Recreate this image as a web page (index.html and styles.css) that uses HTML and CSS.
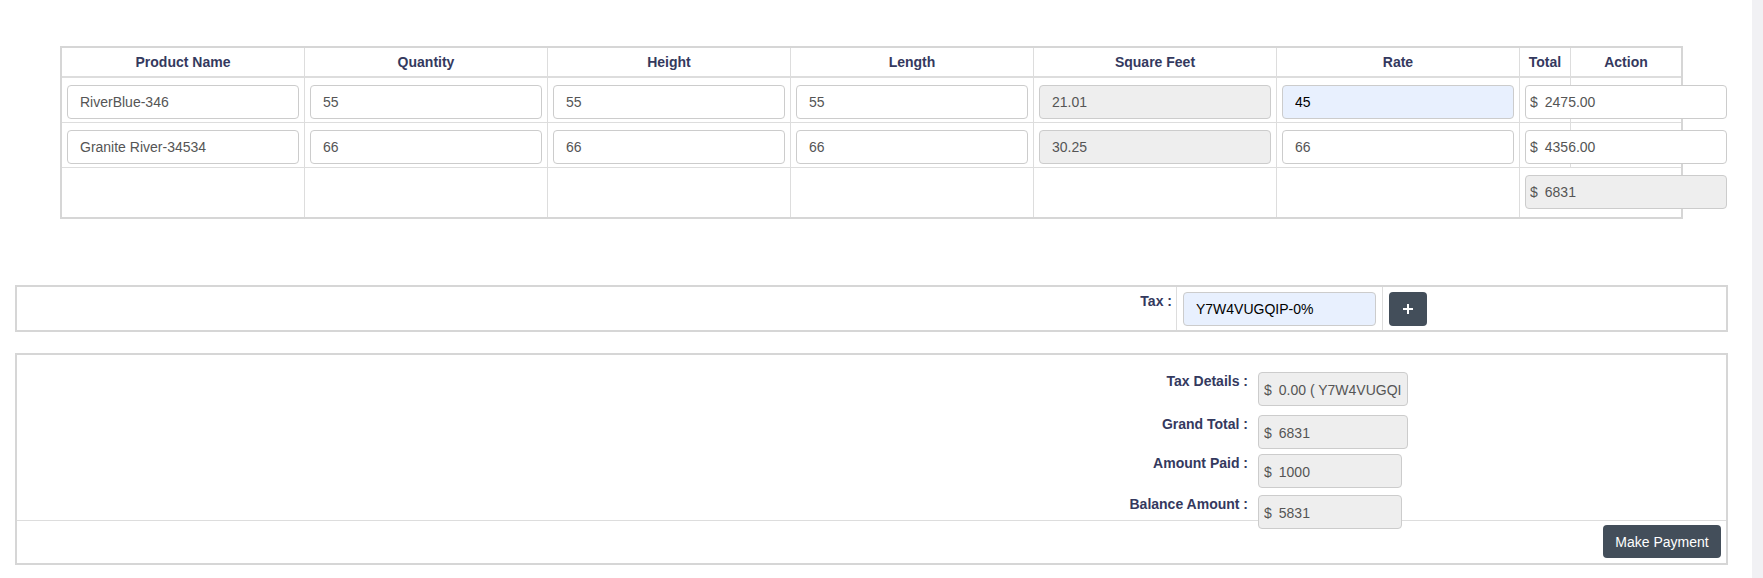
FILE: index.html
```html
<!DOCTYPE html>
<html>
<head>
<meta charset="utf-8">
<link rel="stylesheet" href="styles.css">
</head>
<body>
<div class="page">
  <main class="content">
    <div class="table-wrap">
      <table class="items">
        <thead>
          <tr>
            <th class="c-std">Product Name</th>
            <th class="c-std">Quantity</th>
            <th class="c-std">Height</th>
            <th class="c-std">Length</th>
            <th class="c-std">Square Feet</th>
            <th class="c-std">Rate</th>
            <th class="c-total">Total</th>
            <th class="c-action">Action</th>
          </tr>
        </thead>
        <tbody>
          <tr>
            <td><input class="field" type="text" value="RiverBlue-346"></td>
            <td><input class="field" type="text" value="55"></td>
            <td><input class="field" type="text" value="55"></td>
            <td><input class="field" type="text" value="55"></td>
            <td><input class="field field-ro" type="text" value="21.01" readonly></td>
            <td><input class="field field-auto" type="text" value="45"></td>
            <td><input class="field field-money" type="text" value="$&#8194;2475.00"></td>
            <td></td>
          </tr>
          <tr>
            <td><input class="field" type="text" value="Granite River-34534"></td>
            <td><input class="field" type="text" value="66"></td>
            <td><input class="field" type="text" value="66"></td>
            <td><input class="field" type="text" value="66"></td>
            <td><input class="field field-ro" type="text" value="30.25" readonly></td>
            <td><input class="field" type="text" value="66"></td>
            <td><input class="field field-money" type="text" value="$&#8194;4356.00"></td>
            <td></td>
          </tr>
          <tr class="sum-row-table">
            <td></td>
            <td></td>
            <td></td>
            <td></td>
            <td></td>
            <td></td>
            <td colspan="2"><input class="field field-money field-ro" type="text" value="$&#8194;6831" readonly></td>
          </tr>
        </tbody>
      </table>
    </div>

    <section class="tax-box">
      <div class="tax-label-cell"><span class="label">Tax :</span></div>
      <div class="tax-input-cell"><input class="field field-auto field-tax" type="text" value="Y7W4VUGQIP-0%"></div>
      <div class="tax-btn-cell">
        <button class="btn-dark btn-plus" type="button" aria-label="Add tax">
          <svg width="12" height="12" viewBox="0 0 12 12"><path d="M6 1v10M1 6h10" stroke="#fff" stroke-width="2" fill="none"/></svg>
        </button>
      </div>
    </section>

    <section class="summary-box">
      <div class="summary-body">
        <div class="sum-row sum-row-first">
          <span class="label sum-label">Tax Details :</span>
          <input class="field field-ro field-sum" type="text" value="$&#8194;0.00 ( Y7W4VUGQIP-0% )" readonly>
        </div>
        <div class="sum-row sum-row-second">
          <span class="label sum-label">Grand Total :</span>
          <input class="field field-ro field-sum" type="text" value="$&#8194;6831" readonly>
        </div>
        <div class="sum-row">
          <span class="label sum-label">Amount Paid :</span>
          <input class="field field-ro field-sum field-narrow" type="text" value="$&#8194;1000" readonly>
        </div>
        <div class="sum-row">
          <span class="label sum-label">Balance Amount :</span>
          <input class="field field-ro field-sum field-narrow" type="text" value="$&#8194;5831" readonly>
        </div>
      </div>
      <div class="summary-foot">
        <button class="btn-dark btn-pay" type="button">Make Payment</button>
      </div>
    </section>
  </main>
  <div class="scroll-track"></div>
</div>
</body>
</html>
```

FILE: styles.css
```css
* {
  box-sizing: border-box;
}

html, body {
  margin: 0;
  padding: 0;
  background: #fff;
}

body {
  font-family: "Liberation Sans", Arial, sans-serif;
  font-size: 14px;
  color: #555;
}

.page {
  display: flex;
  min-height: 578px;
}

.content {
  width: 1752px;
  padding: 46px 0 0 15px;
}

.scroll-track {
  width: 11px;
  background: #f1f1f4;
}

.table-wrap {
  width: 1713px;
  padding: 0 45px;
}

.items {
  width: 1623px;
  table-layout: fixed;
  border-collapse: separate;
  border-spacing: 0;
  border: 2px solid #d6d6d6;
}

.items th {
  padding: 4px 5px;
  line-height: 20px;
  font-weight: bold;
  font-size: 14px;
  color: #34395e;
  text-align: center;
  border-right: 1px solid #ddd;
  border-bottom: 2px solid #ddd;
}

.items th:last-child {
  border-right: none;
}

.c-std {
  width: 243px;
}

.c-total {
  width: 51px;
}

.c-action {
  width: 110px;
}

.items td {
  padding: 7px 5px 3px;
  border-right: 1px solid #ddd;
  border-bottom: 1px solid #ddd;
  vertical-align: top;
}

.items td:last-child {
  border-right: none;
}

.items tr:last-child td {
  border-bottom: none;
}

.sum-row-table td {
  padding-bottom: 8px;
}

.field {
  display: block;
  width: 100%;
  height: 34px;
  padding: 0 12px;
  font-family: "Liberation Sans", Arial, sans-serif;
  font-size: 14px;
  color: #555;
  background: #fff;
  border: 1px solid #ccc;
  border-radius: 4px;
  outline: none;
}

.field-ro {
  background: #eee;
}

.field-auto {
  background: #e8f0fe;
  color: #000;
}

.field-money {
  width: 202px;
  padding: 0 4px;
}

.tax-box {
  display: flex;
  width: 1713px;
  margin-top: 66px;
  border: 2px solid #d6d6d6;
}

.tax-label-cell {
  width: 1160px;
  padding: 5px 4px 0 0;
  text-align: right;
  border-right: 1px solid #ddd;
}

.label {
  font-weight: bold;
  color: #34395e;
  line-height: 18px;
}

.tax-input-cell {
  width: 206px;
  padding: 5px 6px 4px;
  border-right: 1px solid #ddd;
}

.field-tax {
  padding: 0 12px;
}

.tax-btn-cell {
  flex: 1;
  padding: 5px 6px 4px;
}

.btn-dark {
  background: #434e5a;
  color: #fff;
  border: none;
  border-radius: 4px;
  font-family: "Liberation Sans", Arial, sans-serif;
  font-size: 14px;
  cursor: pointer;
}

.btn-plus {
  display: flex;
  align-items: center;
  justify-content: center;
  width: 38px;
  height: 34px;
  padding: 0;
}

.summary-box {
  width: 1713px;
  margin-top: 21px;
  border: 2px solid #d6d6d6;
}

.summary-body {
  height: 166px;
  padding-top: 17px;
  border-bottom: 1px solid #ddd;
}

.sum-row {
  display: flex;
  align-items: flex-start;
  margin-bottom: 7px;
}

.sum-row-first {
  margin-bottom: 9px;
}

.sum-row-second {
  margin-bottom: 5px;
}

.sum-label {
  width: 1236px;
  padding-right: 5px;
  text-align: right;
}

.field-sum {
  width: 150px;
  margin-left: 5px;
  padding: 1px 5px 0;
}

.field-narrow {
  width: 144px;
}

.summary-foot {
  display: flex;
  justify-content: flex-end;
  padding: 4px 5px 5px;
}

.btn-pay {
  width: 118px;
  height: 33px;
  padding: 0;
}
```
